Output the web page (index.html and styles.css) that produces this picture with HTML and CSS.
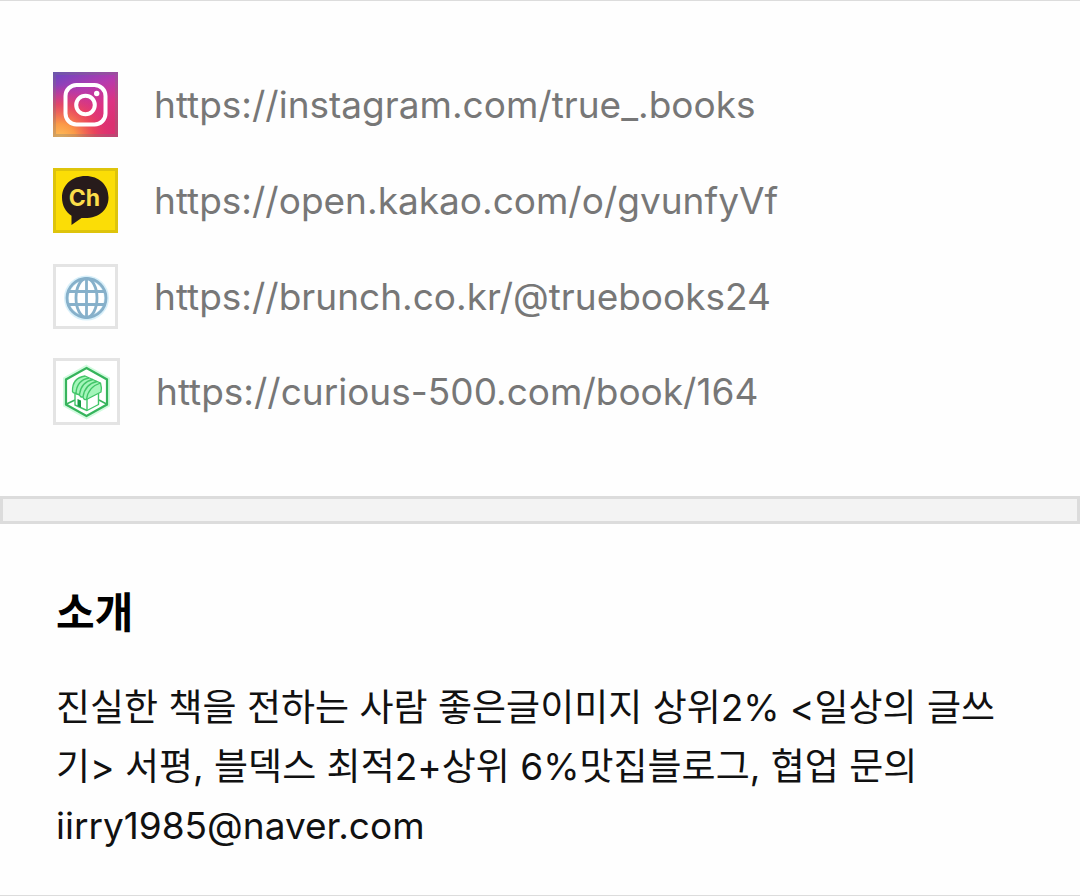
FILE: index.html
```html
<!DOCTYPE html>
<html lang="ko">
<head>
<meta charset="utf-8">
<meta name="viewport" content="width=device-width, initial-scale=1">
<title>소개</title>
<link rel="stylesheet" href="styles.css">
</head>
<body>
<main class="profile">
  <ul class="links">
    <li>
      <a class="link" href="https://instagram.com/true_.books">
        <svg class="icon" viewBox="0 0 65 65" aria-hidden="true">
          <defs>
            <linearGradient id="ig-base" x1="0" y1="0" x2=".4" y2="1">
              <stop offset="0" stop-color="#6549c4"/>
              <stop offset=".4" stop-color="#b53aae"/>
              <stop offset=".7" stop-color="#dd3283"/>
              <stop offset="1" stop-color="#dc3070"/>
            </linearGradient>
            <radialGradient id="ig-glow" cx=".1" cy="1.05" r=".85">
              <stop offset="0" stop-color="#ffc45c"/>
              <stop offset=".3" stop-color="#fb9a48"/>
              <stop offset=".65" stop-color="#ee4b55" stop-opacity=".75"/>
              <stop offset="1" stop-color="#dc2f7d" stop-opacity="0"/>
            </radialGradient>
          </defs>
          <rect width="65" height="65" fill="url(#ig-base)"/>
          <rect width="65" height="65" fill="url(#ig-glow)"/>
          <rect x="1.5" y="1.5" width="62" height="62" fill="none" stroke="#777" stroke-opacity=".3" stroke-width="3"/>
          <g fill="none" stroke="#fff" stroke-width="4">
            <rect x="12.500" y="13" width="40" height="39.500" rx="11"/>
            <circle cx="32.500" cy="33" r="9.300"/>
          </g>
          <circle cx="43.700" cy="21.500" r="2.700" fill="#fff"/>
        </svg>
        <span>https://instagram.com/true_.books</span>
      </a>
    </li>
    <li>
      <a class="link" href="https://open.kakao.com/o/gvunfyVf">
        <svg class="icon" viewBox="0 0 65 65" aria-hidden="true">
          <rect width="65" height="65" fill="#dec40b"/>
          <rect x="3" y="3" width="59" height="59" fill="#fbdd06"/>
          <path d="M32.500 8C19 8 9 17 9 29.500c0 8.200 3.800 14.500 9.500 18.300V57l10-7c17 1.300 27-8 27-20.500C55.500 17 46 8 32.500 8z" fill="#271b1b"/>
          <text class="icon-mark" x="31.500" y="38" text-anchor="middle">Ch</text>
        </svg>
        <span>https://open.kakao.com/o/gvunfyVf</span>
      </a>
    </li>
    <li>
      <a class="link" href="https://brunch.co.kr/@truebooks24">
        <svg class="icon" viewBox="0 0 65 65" aria-hidden="true">
          <rect x="1.500" y="1.500" width="62" height="62" fill="#fff" stroke="#e4e4e4" stroke-width="3"/>
          <g fill="none" stroke="#d9f0fa" stroke-width="5">
            <circle cx="33.500" cy="34" r="20"/>
          </g>
          <g fill="none" stroke="#86b0ca" stroke-width="2.800">
            <circle cx="33.500" cy="34" r="19.500"/>
            <ellipse cx="33.500" cy="34" rx="10.500" ry="19.500"/>
            <path d="M33.500 14v40M16 27.500h35M16 40.500h35"/>
          </g>
        </svg>
        <span>https://brunch.co.kr/@truebooks24</span>
      </a>
    </li>
    <li>
      <a class="link link-store" href="https://curious-500.com/book/164">
        <svg class="icon" viewBox="0 0 67 67" aria-hidden="true">
          <rect x="1.500" y="1.500" width="64" height="64" fill="#fff" stroke="#e4e4e4" stroke-width="3"/>
          <path d="M33.500 10L54 21.500v25L33.500 58 13 46.500v-25z" fill="none" stroke="#d2fbdf" stroke-width="6"/>
          <path d="M33.500 10L54 21.500v25L33.500 58 13 46.500v-25z" fill="#fff" stroke="#36b45c" stroke-width="2.200"/>
          <path d="M13.500 46l8.500-4M53.500 46L46 42" fill="none" stroke="#36b45c" stroke-width="1.500"/>
          <path d="M22 35v12l12 5.500 11.500-6V34L34 40z" fill="#fff" stroke="#42c568" stroke-width="1.400" stroke-linejoin="round"/>
          <path d="M34 40v12.500" stroke="#42c568" stroke-width="1.400"/>
          <path d="M24.500 48v-7l3.500 1.500v7z" fill="#1a9b48"/>
          <g fill="#a4f5ba" stroke="#42c568" stroke-width="1.300" stroke-linejoin="round">
            <path d="M32 18L47.500 25q1.500 5 .5 9l-14.500 7.500q-3 .5-3.500-2.500-3 .5-3.500-2.500-3 0-3.500-1.500-3 .5-3.500-1.500Q19 20 32 18z"/>
            <path d="M36 20Q24 22 23 35M40 21.500Q28 24 26.500 36.500M44 23.500Q32 26 30 39M47.500 25Q35 29 33.500 41.500" fill="none"/>
          </g>
        </svg>
        <span>https://curious-500.com/book/164</span>
      </a>
    </li>
  </ul>
  <div class="divider"></div>
  <section class="about">
    <h2 class="about-title">소개</h2>
    <p class="about-text">진실한 책을 전하는 사람 좋은글이미지 상위2% &lt;일상의 글쓰기&gt; 서평, 블덱스 최적2+상위 6%맛집블로그, 협업 문의 iirry1985@naver.com</p>
  </section>
</main>
</body>
</html>
```
FILE: styles.css
```css
* {
  box-sizing: border-box;
}

body {
  margin: 0;
  background: #fefefe;
  font-family: Inter, "Noto Sans CJK KR", sans-serif;
}

.profile {
  border-top: 1px solid #dcdcdc;
  border-bottom: 1px solid #dcdcdc;
}

.links {
  display: flex;
  flex-direction: column;
  gap: 31px;
  margin: 0;
  padding: 71px 53px;
  list-style: none;
}

.link {
  display: flex;
  align-items: center;
  gap: 36px;
  color: #777;
  font-size: 37px;
  line-height: 65px;
  text-decoration: none;
}

.icon {
  flex: none;
  width: 65px;
  height: 65px;
}

.link-store {
  margin-top: -2px;
}

.link-store .icon {
  width: 67px;
  height: 67px;
}

.icon-mark {
  fill: #fbdd4a;
  font-family: Inter, sans-serif;
  font-size: 23px;
  font-weight: 700;
}

.divider {
  height: 28px;
  border: 3px solid #dcdcdc;
  background: #f3f3f3;
}

.about {
  padding: 57px 56px 40px;
}

.about-title {
  margin: 0;
  color: #000;
  font-size: 42px;
  font-weight: 700;
  line-height: 64px;
}

.about-text {
  margin: 33px 0 0;
  color: #111;
  font-size: 37px;
  line-height: 59px;
  overflow-wrap: anywhere;
}
```
